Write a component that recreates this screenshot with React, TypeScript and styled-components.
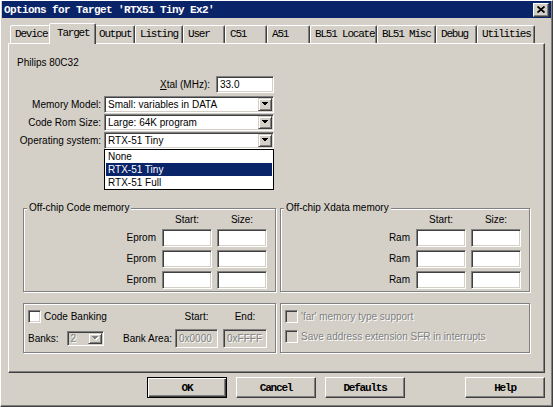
import React from 'react';
import styled, { createGlobalStyle, css } from 'styled-components';

const FACE = '#d4d0c8';
const SHADOW = '#808080';
const DARK = '#404040';
const NAVY = '#0a246a';
const MONO = '"Liberation Mono", "Courier New", monospace';

const tabs = [
  { label: 'Device', width: 41 },
  { label: 'Target', width: 43, active: true },
  { label: 'Output', width: 41 },
  { label: 'Listing', width: 48 },
  { label: 'User', width: 42 },
  { label: 'C51', width: 42 },
  { label: 'A51', width: 43 },
  { label: 'BL51 Locate', width: 67 },
  { label: 'BL51 Misc', width: 59 },
  { label: 'Debug', width: 41 },
  { label: 'Utilities', width: 58 },
];

const osOptions = ['None', 'RTX-51 Tiny', 'RTX-51 Full'];

const GlobalStyle = createGlobalStyle`
  html, body {
    margin: 0;
    padding: 0;
    background: ${FACE};
  }
  body {
    font-family: "Liberation Sans", Arial, sans-serif;
    font-size: 10px;
    color: #000;
  }
  * {
    box-sizing: border-box;
  }
`;

const raised = css`
  border: 1px solid;
  border-color: #fff ${DARK} ${DARK} #fff;
  box-shadow: inset -1px -1px 0 ${SHADOW};
`;

const sunken = css`
  border: 1px solid;
  border-color: ${SHADOW} #fff #fff ${SHADOW};
  box-shadow: inset 1px 1px 0 ${DARK}, inset -1px -1px 0 ${FACE};
`;

const disabledText = css`
  color: ${SHADOW};
  text-shadow: 1px 1px 0 #fff;
`;

const Window = styled.div`
  width: 553px;
  height: 407px;
  background: ${FACE};
  border: 1px solid;
  border-color: #fff ${DARK} ${DARK} #fff;
  box-shadow: inset -1px -1px 0 ${SHADOW};
  padding: 0 1px;
  display: flex;
  flex-direction: column;
  overflow: hidden;
`;

const TitleBar = styled.div`
  height: 17px;
  background: ${NAVY};
  display: flex;
  align-items: center;
  justify-content: space-between;
  padding: 0 2px 0 2px;
`;

const Title = styled.span`
  font: bold 11px ${MONO};
  letter-spacing: -0.6px;
  color: #fff;
  white-space: pre;
`;

const CloseButton = styled.span`
  width: 16px;
  height: 14px;
  background: ${FACE};
  ${raised};
  display: flex;
  align-items: center;
  justify-content: center;
`;

const Body = styled.div`
  padding-left: 6px;
  display: flex;
  flex-direction: column;
`;

const TabStrip = styled.div`
  margin-top: 5px;
  height: 20px;
  display: flex;
  align-items: flex-end;
  padding-left: 2px;
  position: relative;
  z-index: 2;
`;

const Tab = styled.div<{ $width: number; $active?: boolean }>`
  flex: none;
  width: ${(p) => p.$width + (p.$active ? 4 : 0)}px;
  height: ${(p) => (p.$active ? 21 : 18)}px;
  margin: 0 ${(p) => (p.$active ? '-2px -1px' : '0 0')};
  padding: ${(p) => (p.$active ? '1px 0 0 7px' : '0 0 0 4px')};
  background: ${FACE};
  border: 1px solid;
  border-bottom: none;
  border-color: #fff ${DARK} transparent #fff;
  border-radius: 2px 2px 0 0;
  box-shadow: inset -1px 0 0 ${SHADOW};
  font: 11px ${MONO};
  letter-spacing: -1.2px;
  line-height: 17px;
  white-space: pre;
  position: relative;
  z-index: ${(p) => (p.$active ? 2 : 1)};
`;

const TabPage = styled.div`
  width: 537px;
  height: 330px;
  ${raised};
  padding-left: 8px;
  position: relative;
  z-index: 1;
`;

const DeviceName = styled.div`
  margin-top: 13px;
  line-height: 12px;
`;

const FormGrid = styled.div`
  margin-top: 9px;
  display: grid;
  grid-template-columns: 84px 170px;
  grid-auto-rows: 17px;
  column-gap: 3px;
  row-gap: 1px;
`;

const XtalRow = styled.div`
  grid-column: 1 / -1;
  display: flex;
  justify-content: flex-end;
  align-items: center;
  gap: 6px;
  margin-bottom: 4px;
`;

const FieldLabel = styled.span`
  text-align: right;
  line-height: 17px;
  white-space: nowrap;
`;

const TextBox = styled.div<{ $width?: number; $height?: number; $disabled?: boolean }>`
  width: ${(p) => (p.$width ? `${p.$width}px` : 'auto')};
  height: ${(p) => p.$height ?? 18}px;
  ${sunken};
  background: ${(p) => (p.$disabled ? FACE : '#fff')};
  padding: 1px 3px;
  line-height: ${(p) => (p.$height ?? 18) - 4}px;
  white-space: nowrap;
  overflow: hidden;
  ${(p) => p.$disabled && disabledText};
`;

const ComboCell = styled.div`
  position: relative;
`;

const Combo = styled.div<{ $width?: number; $height?: number; $disabled?: boolean }>`
  width: ${(p) => (p.$width ? `${p.$width}px` : '100%')};
  height: ${(p) => p.$height ?? 17}px;
  ${sunken};
  background: ${(p) => (p.$disabled ? FACE : '#fff')};
  padding: 1px;
  display: flex;
`;

const ComboText = styled.span<{ $disabled?: boolean }>`
  flex: 1;
  padding-left: 2px;
  display: flex;
  align-items: center;
  white-space: nowrap;
  overflow: hidden;
  ${(p) => p.$disabled && disabledText};
`;

const DropButton = styled.span`
  width: 14px;
  flex: none;
  background: ${FACE};
  border: 1px solid;
  border-color: ${FACE} ${DARK} ${DARK} ${FACE};
  box-shadow: inset 1px 1px 0 #fff, inset -1px -1px 0 ${SHADOW};
  display: flex;
  align-items: center;
  justify-content: center;
`;

const DropList = styled.ul`
  position: absolute;
  top: 100%;
  left: 0;
  width: 170px;
  margin: 0;
  padding: 0 1px;
  list-style: none;
  background: #fff;
  border: 1px solid #000;
  z-index: 5;
`;

const DropItem = styled.li<{ $selected?: boolean }>`
  height: 13px;
  line-height: 13px;
  padding-left: 2px;
  background: ${(p) => (p.$selected ? NAVY : 'transparent')};
  color: ${(p) => (p.$selected ? '#fff' : '#000')};
`;

const GroupRow = styled.div<{ $gap: number }>`
  margin: ${(p) => p.$gap}px 0 0 6px;
  display: flex;
  gap: 4px;
`;

const GroupBox = styled.fieldset<{ $width: number }>`
  width: ${(p) => p.$width}px;
  min-width: 0;
  margin: 0;
  padding: 0;
  border: 1px solid ${SHADOW};
  box-shadow: 1px 1px 0 #fff, inset 1px 1px 0 #fff;
`;

const Legend = styled.legend`
  margin-left: 3px;
  padding: 0 2px;
  line-height: 12px;
  background: ${FACE};
`;

const MemoryGrid = styled.div`
  display: grid;
  grid-template-columns: auto 50px 50px;
  grid-template-rows: 12px;
  grid-auto-rows: 18px;
  justify-content: end;
  column-gap: 5px;
  row-gap: 3px;
  padding: 0 8px 2px 0;
`;

const ColumnHead = styled.span`
  text-align: center;
  line-height: 12px;
`;

const RowLabel = styled.span`
  text-align: right;
  line-height: 18px;
  padding-right: 1px;
`;

const BankGrid = styled.div`
  display: grid;
  grid-template-columns: 1fr auto 43px 44px;
  grid-template-rows: 13px 19px;
  column-gap: 5px;
  row-gap: 6px;
  align-items: center;
  padding: 6px 8px 4px 4px;
`;

const CheckRow = styled.label<{ $span?: boolean; $disabled?: boolean }>`
  display: flex;
  align-items: center;
  gap: 3px;
  ${(p) => p.$span && 'grid-column: 1 / 3;'};
  ${(p) => p.$disabled && disabledText};
`;

const CheckBox = styled.span<{ $disabled?: boolean }>`
  width: 13px;
  height: 13px;
  flex: none;
  ${sunken};
  background: ${(p) => (p.$disabled ? FACE : '#fff')};
`;

const BanksField = styled.div`
  display: flex;
  align-items: center;
  gap: 8px;
`;

const AreaLabel = styled.span`
  text-align: right;
  margin-right: -2px;
`;

const OptionsList = styled.div`
  display: flex;
  flex-direction: column;
  gap: 7px;
  padding: 6px 4px 8px;
`;

const ButtonRow = styled.div`
  width: 537px;
  margin-top: 4px;
  padding-left: 139px;
  display: flex;
  gap: 9px;
`;

const Button = styled.button<{ $default?: boolean; $push?: boolean }>`
  width: 80px;
  height: 21px;
  padding: 0;
  background: ${FACE};
  font: bold 11px ${MONO};
  letter-spacing: -1.2px;
  color: #000;
  ${(p) =>
    p.$default
      ? css`
          border: 1px solid #000;
          box-shadow: inset 1px 1px 0 #fff, inset -1px -1px 0 ${DARK}, inset -2px -2px 0 ${SHADOW};
        `
      : raised};
  ${(p) => p.$push && 'margin-left: auto;'};
`;

const Arrow = ({ disabled }: { disabled?: boolean }) => (
  <svg width="8" height="5" viewBox="0 0 8 5" shapeRendering="crispEdges">
    {disabled && <path d="M1 1h7L4.5 4.5z" fill="#fff" />}
    <path d="M0 0h7L3.5 3.5z" fill={disabled ? SHADOW : '#000'} />
  </svg>
);

const CloseIcon = () => (
  <svg width="8" height="7" viewBox="0 0 8 7">
    <path d="M0.5 0.5L7.5 6.5M7.5 0.5L0.5 6.5" stroke="#000" strokeWidth="1.8" />
  </svg>
);

const SelectBox = ({ value, open }: { value: string; open?: boolean }) => (
  <ComboCell>
    <Combo>
      <ComboText>{value}</ComboText>
      <DropButton>
        <Arrow />
      </DropButton>
    </Combo>
    {open && (
      <DropList>
        {osOptions.map((o) => (
          <DropItem key={o} $selected={o === value}>
            {o}
          </DropItem>
        ))}
      </DropList>
    )}
  </ComboCell>
);

const MemoryGroup = ({ title, row, width }: { title: string; row: string; width: number }) => (
  <GroupBox $width={width}>
    <Legend>{title}</Legend>
    <MemoryGrid>
      <span />
      <ColumnHead>Start:</ColumnHead>
      <ColumnHead>Size:</ColumnHead>
      {[0, 1, 2].map((i) => (
        <React.Fragment key={i}>
          <RowLabel>{row}</RowLabel>
          <TextBox />
          <TextBox />
        </React.Fragment>
      ))}
    </MemoryGrid>
  </GroupBox>
);

export default function App() {
  return (
    <>
      <GlobalStyle />
      <Window>
        <TitleBar>
          <Title>Options for Target 'RTX51 Tiny Ex2'</Title>
          <CloseButton>
            <CloseIcon />
          </CloseButton>
        </TitleBar>
        <Body>
          <TabStrip>
            {tabs.map((t) => (
              <Tab key={t.label} $width={t.width} $active={t.active}>
                {t.label}
              </Tab>
            ))}
          </TabStrip>
          <TabPage>
            <DeviceName>Philips 80C32</DeviceName>
            <FormGrid>
              <XtalRow>
                <FieldLabel>
                  <u>X</u>tal (MHz):
                </FieldLabel>
                <TextBox $width={58} $height={17}>
                  33.0
                </TextBox>
              </XtalRow>
              <FieldLabel>Memory Model:</FieldLabel>
              <SelectBox value="Small: variables in DATA" />
              <FieldLabel>Code Rom Size:</FieldLabel>
              <SelectBox value="Large: 64K program" />
              <FieldLabel>Operating system:</FieldLabel>
              <SelectBox value="RTX-51 Tiny" open />
            </FormGrid>

            <GroupRow $gap={53}>
              <MemoryGroup title="Off-chip Code memory" row="Eprom" width={253} />
              <MemoryGroup title="Off-chip Xdata memory" row="Ram" width={250} />
            </GroupRow>

            <GroupRow $gap={11}>
              <GroupBox $width={253}>
                <BankGrid>
                  <CheckRow $span>
                    <CheckBox />
                    Code Banking
                  </CheckRow>
                  <ColumnHead>Start:</ColumnHead>
                  <ColumnHead>End:</ColumnHead>
                  <BanksField>
                    <span>Banks:</span>
                    <Combo $width={37} $height={15} $disabled>
                      <ComboText $disabled>2</ComboText>
                      <DropButton>
                        <Arrow disabled />
                      </DropButton>
                    </Combo>
                  </BanksField>
                  <AreaLabel>Bank Area:</AreaLabel>
                  <TextBox $height={19} $disabled>
                    0x0000
                  </TextBox>
                  <TextBox $height={19} $disabled>
                    0xFFFF
                  </TextBox>
                </BankGrid>
              </GroupBox>
              <GroupBox $width={250}>
                <OptionsList>
                  <CheckRow $disabled>
                    <CheckBox $disabled />
                    'far' memory type support
                  </CheckRow>
                  <CheckRow $disabled>
                    <CheckBox $disabled />
                    Save address extension SFR in interrupts
                  </CheckRow>
                </OptionsList>
              </GroupBox>
            </GroupRow>
          </TabPage>
          <ButtonRow>
            <Button $default>OK</Button>
            <Button>Cancel</Button>
            <Button>Defaults</Button>
            <Button $push>Help</Button>
          </ButtonRow>
        </Body>
      </Window>
    </>
  );
}
